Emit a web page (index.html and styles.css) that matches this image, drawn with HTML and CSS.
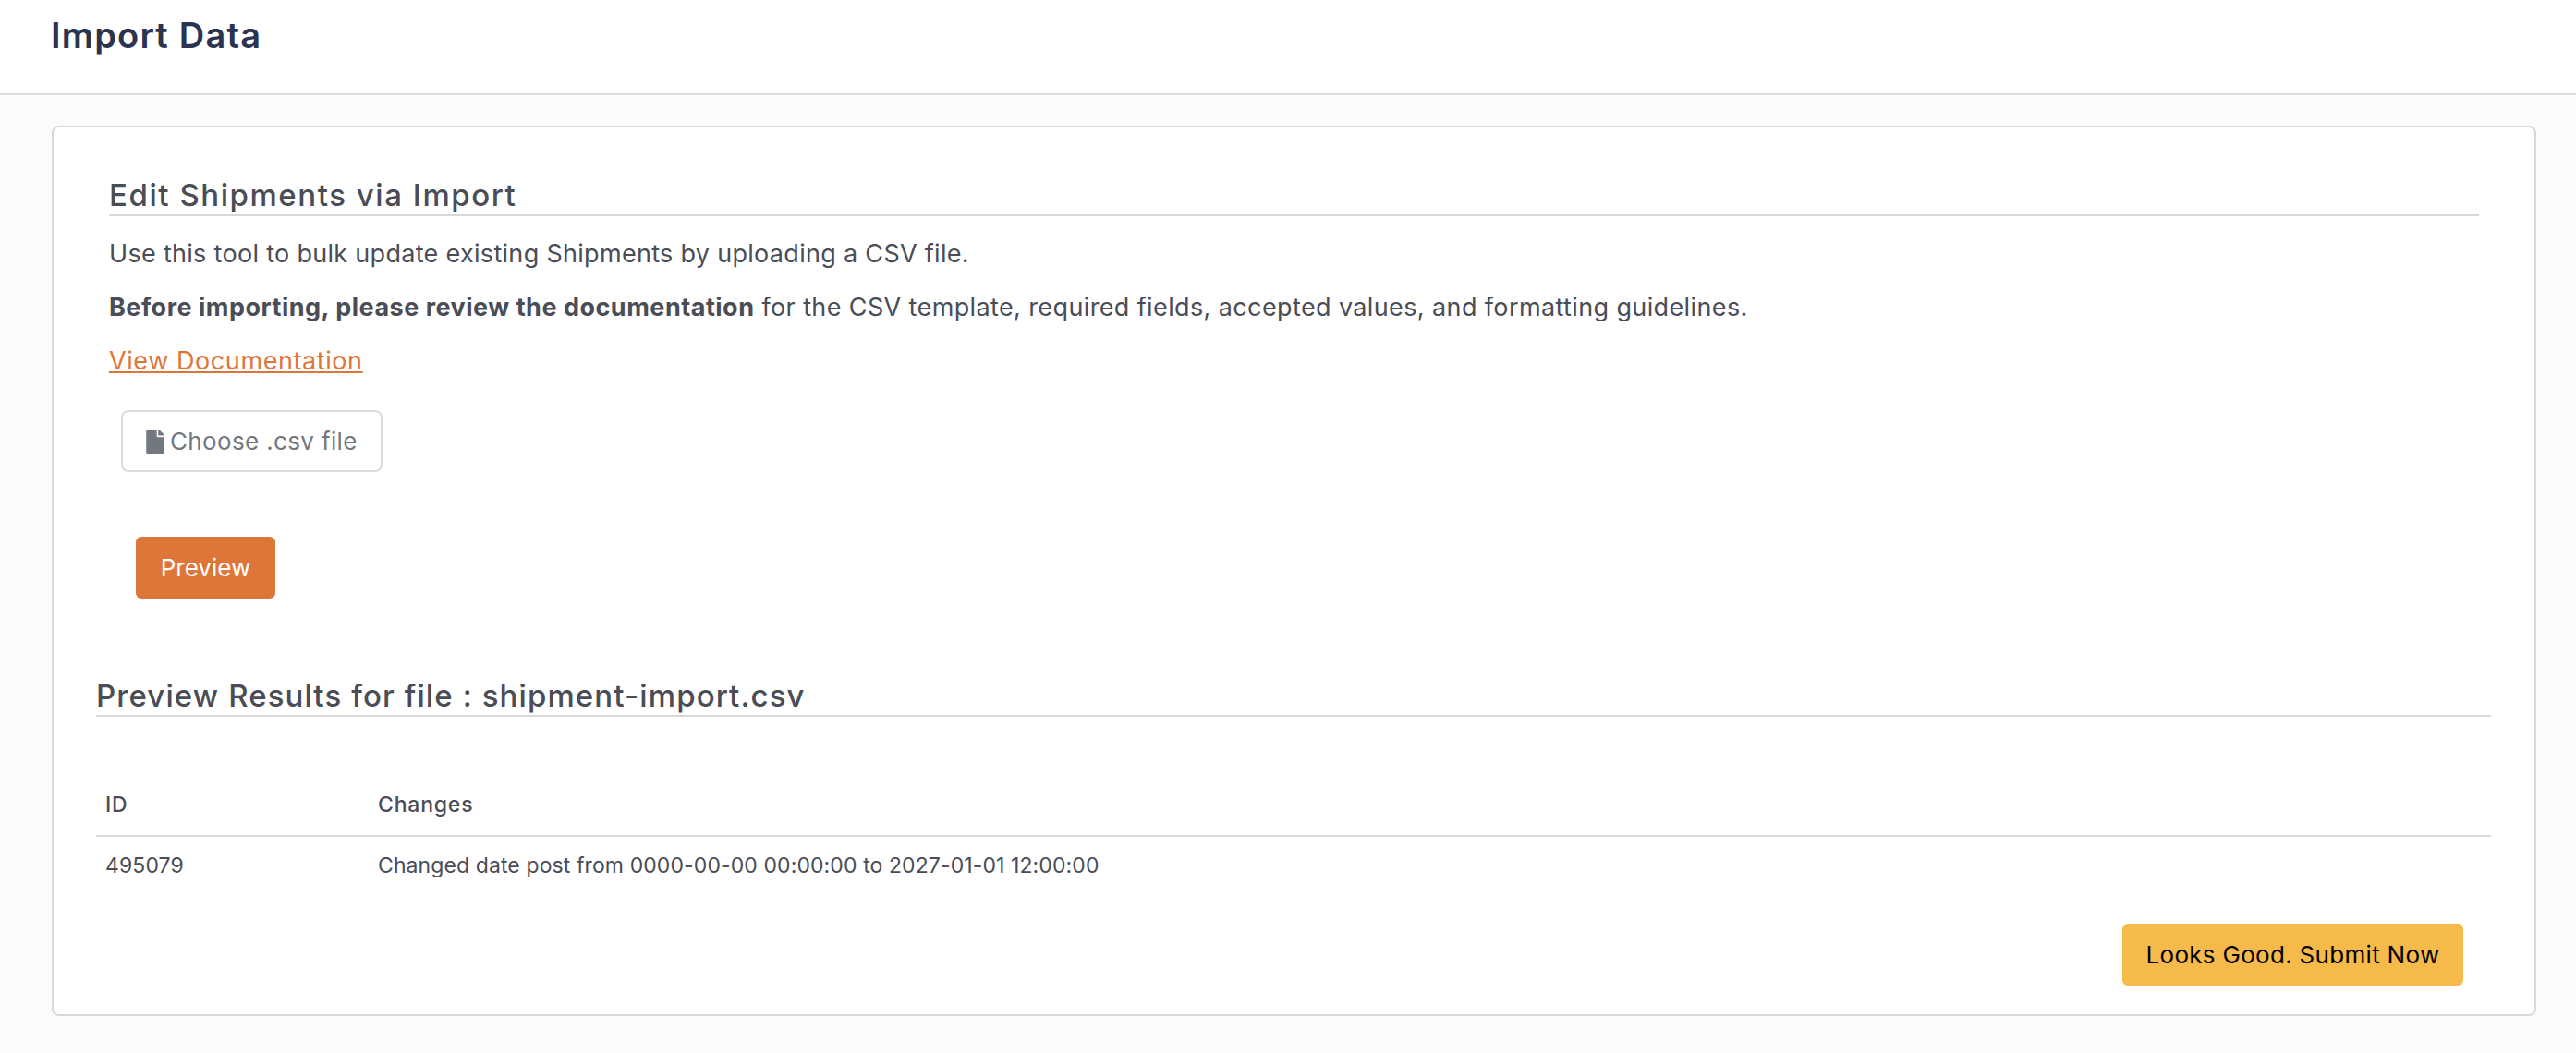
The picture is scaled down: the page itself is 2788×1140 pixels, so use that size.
FILE: index.html
```html
<!DOCTYPE html>
<html lang="en">
<head>
  <meta charset="UTF-8" />
  <title>Import Data</title>
  <link rel="stylesheet" href="styles.css">
</head>
<body>
  <header class="page-header">
    <h1>Import Data</h1>
  </header>

  <main class="page-body">
    <section class="card">
      <div class="import-form">
        <h2 class="section-title">Edit Shipments via Import</h2>
        <p class="intro">Use this tool to bulk update existing Shipments by uploading a CSV file.</p>
        <p><strong>Before importing, please review the documentation</strong> for the CSV template, required fields, accepted values, and formatting guidelines.</p>
        <p><a class="doc-link" href="#">View Documentation</a></p>
        <label class="file-btn">
          <svg class="file-icon" viewBox="0 0 384 512"><path d="M224 136V0H24C10.700 0 0 10.700 0 24v464c0 13.300 10.700 24 24 24h336c13.300 0 24-10.700 24-24V160H248c-13.200 0-24-10.800-24-24zm160-14.100v6.100H256V0h6.100c6.400 0 12.500 2.500 17 7l97.900 98c4.500 4.500 7 10.600 7 16.900z"/></svg>
          Choose .csv file
        </label>
        <button class="btn btn-preview">Preview</button>
      </div>

      <div class="results">
        <h2 class="section-title results-title">Preview Results for file : shipment-import.csv</h2>
        <table class="results-table">
          <thead>
            <tr><th class="col-id">ID</th><th>Changes</th></tr>
          </thead>
          <tbody>
            <tr><td>495079</td><td>Changed date post from 0000-00-00 00:00:00 to 2027-01-01 12:00:00</td></tr>
          </tbody>
        </table>
        <div class="submit-row">
          <button class="btn btn-submit">Looks Good. Submit Now</button>
        </div>
      </div>
    </section>
  </main>
</body>
</html>
```

FILE: styles.css
```css
* { margin: 0; padding: 0; box-sizing: border-box; }
body {
  font-family: "Inter", "Open Sans", sans-serif;
  background: #fbfbfb;
  color: #4a4c56;
}
.page-header {
  height: 103px;
  background: #fff;
  border-bottom: 2px solid #dcdcdc;
  padding: 16px 55px 0;
}
.page-header h1 {
  font-size: 38px;
  line-height: 44px;
  font-weight: 600;
  color: #2b3350;
  letter-spacing: 1.2px;
}
.page-body {
  padding: 33px 43px 40px 56px;
}
.card {
  height: 964px;
  background: #fff;
  border: 2px solid #d8d8d8;
  border-radius: 8px;
  padding: 0 47px 0 46px;
}
.import-form {
  padding: 52px 13px 0 14px;
}
.section-title {
  font-size: 33px;
  line-height: 42px;
  font-weight: 500;
  letter-spacing: 1.55px;
  color: #4a4c56;
  border-bottom: 2px solid #d8d8d8;
}
.results-title {
  letter-spacing: 1.1px;
}
.import-form p {
  font-size: 27px;
  line-height: 34px;
  letter-spacing: 0.38px;
  margin-top: 24px;
}
.import-form .intro {
  letter-spacing: 0.3px;
}
.import-form strong {
  letter-spacing: 0.5px;
}
.doc-link {
  color: #df7639;
  letter-spacing: 0.58px;
}
.file-btn {
  display: flex;
  align-items: center;
  gap: 6px;
  width: 283px;
  height: 67px;
  margin: 36px 0 0 13px;
  padding-left: 25px;
  font-size: 26px;
  letter-spacing: 0.35px;
  color: #717880;
  background: #fff;
  border: 2px solid #dcdcdc;
  border-radius: 8px;
}
.file-icon {
  width: 20px;
  height: 26px;
  fill: #717880;
}
.btn {
  display: block;
  height: 67px;
  border: none;
  border-radius: 6px;
  font-family: inherit;
  font-size: 26px;
}
.btn-preview {
  width: 151px;
  margin: 70px 0 0 29px;
  background: #df7639;
  color: #fff;
}
.results {
  margin-top: 84px;
}
.results-table {
  width: 100%;
  margin-top: 80px;
  border-collapse: collapse;
  font-size: 23px;
}
.results-table th {
  text-align: left;
  font-weight: 500;
  letter-spacing: 0.8px;
  padding: 0 10px 18px;
  line-height: 30px;
  border-bottom: 2px solid #d8d8d8;
}
.results-table td {
  padding: 16px 10px;
  line-height: 30px;
  letter-spacing: 0.1px;
}
.col-id {
  width: 295px;
}
.submit-row {
  display: flex;
  justify-content: flex-end;
  padding: 0 30px 0 0;
  margin-top: 32px;
}
.btn-submit {
  width: 369px;
  letter-spacing: 0.3px;
  background: #f5ba4a;
  color: #000;
}
```
